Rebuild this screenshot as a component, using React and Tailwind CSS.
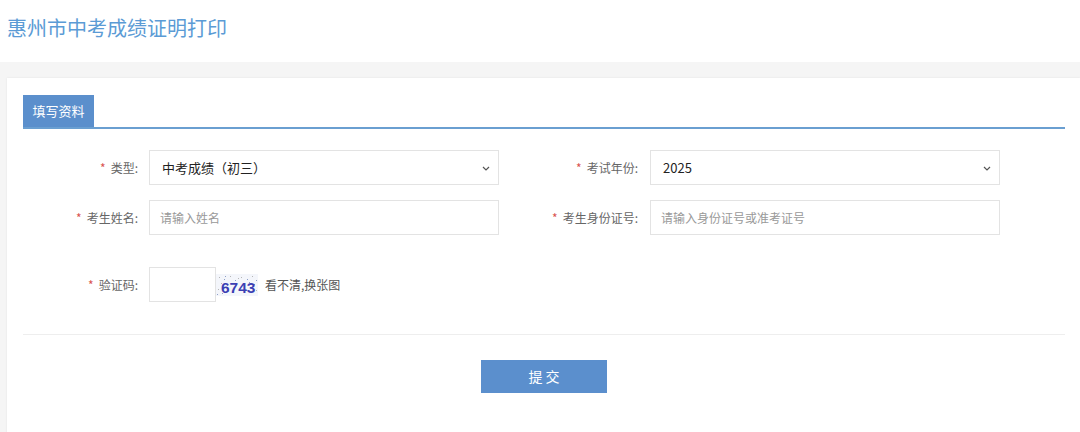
import React from "react";

const font = { fontFamily: '"Noto Sans CJK SC", "Noto Sans", sans-serif' };

function Chevron() {
  return (
    <svg className="pointer-events-none absolute right-[8px] top-[15px]" width="8" height="5" viewBox="0 0 8 5">
      <path d="M1 1 L4 4 L7 1" fill="none" stroke="#555" strokeWidth="1.2" />
    </svg>
  );
}

function Label({ children, w }) {
  return (
    <div className={`${w} shrink-0 text-right text-[12px] text-[#666] leading-[35px]`}>
      <span className="text-[#d9534f] mr-[5px]">*</span>
      {children}
    </div>
  );
}

function Captcha() {
  const dots = [
    [3, 3], [8, 5], [14, 2], [19, 6], [25, 3], [31, 5], [36, 2], [40, 6], [5, 9], [11, 11], [28, 9], [38, 10],
    [2, 15], [6, 19], [40, 16], [1, 20], [22, 4], [33, 8], [17, 9], [9, 2],
  ];
  return (
    <svg width="42" height="22" viewBox="0 0 42 22" className="mt-[1px]">
      <rect width="42" height="22" fill="#f4f6fb" />
      {dots.map(([x, y], i) => (
        <rect key={i} x={x} y={y} width="1" height="1" fill={i % 2 ? "#8fa0c8" : "#b6b6b6"} />
      ))}
      <text x="5" y="19" fontSize="15.5" fontWeight="700" fill="#3b3fb3" fontFamily="'Liberation Sans', Arial, sans-serif">
        6743
      </text>
    </svg>
  );
}

export default function App() {
  return (
    <div style={font} className="w-[1080px] h-[432px] overflow-hidden bg-[#f5f5f5]">
      <div className="h-[62px] bg-white pl-[7px] pt-[13px]">
        <div className="text-[20px] leading-[30px] text-[#5b9bd5]">惠州市中考成绩证明打印</div>
      </div>
      <div className="pt-[16px] pl-[7px]">
        <div className="bg-white h-[400px] pl-[16px] pt-[17px] shadow-[0_0_2px_rgba(0,0,0,0.08)]">
          <div className="w-[1042px]">
            <div className="flex border-b-2 border-[#6a9fd1]">
              <div className="w-[71px] h-[32px] bg-[#5b8fcc] text-white text-[13px] leading-[32px] text-center">
                填写资料
              </div>
            </div>

            <div className="mt-[21px] flex flex-col gap-[15px]">
              <div className="flex">
                <Label w="w-[115px]">类型:</Label>
                <div className="relative ml-[11px] w-[350px] h-[35px] border border-[#e3e3e3] bg-white">
                  <div className="pl-[12px] text-[13px] leading-[33px] text-[#222]">中考成绩（初三）</div>
                  <Chevron />
                </div>
                <Label w="w-[139px]">考试年份:</Label>
                <div className="relative ml-[12px] w-[350px] h-[35px] border border-[#e3e3e3] bg-white">
                  <div className="pl-[12px] text-[13px] leading-[33px] text-[#222]">2025</div>
                  <Chevron />
                </div>
              </div>
              <div className="flex">
                <Label w="w-[115px]">考生姓名:</Label>
                <div className="ml-[11px] w-[350px] h-[35px] border border-[#e3e3e3] bg-white pl-[10px] text-[12px] leading-[33px] text-[#999]">
                  请输入姓名
                </div>
                <Label w="w-[139px]">考生身份证号:</Label>
                <div className="ml-[12px] w-[350px] h-[35px] border border-[#e3e3e3] bg-white pl-[10px] text-[12px] leading-[33px] text-[#999]">
                  请输入身份证号或准考证号
                </div>
              </div>
            </div>

            <div className="mt-[32px] flex items-center">
              <Label w="w-[115px]">验证码:</Label>
              <div className="ml-[11px] w-[67px] h-[35px] border border-[#e3e3e3] bg-white" />
              <Captcha />
              <div className="ml-[7px] text-[12px] text-[#555]">看不清,换张图</div>
            </div>

            <div className="mt-[32px] h-px bg-[#eeeeee]" />

            <div className="mt-[25px] flex justify-center">
              <div className="w-[126px] h-[33px] bg-[#5b8fcd] text-white text-[14px] leading-[33px] text-center">
                提 交
              </div>
            </div>
          </div>
        </div>
      </div>
    </div>
  );
}
